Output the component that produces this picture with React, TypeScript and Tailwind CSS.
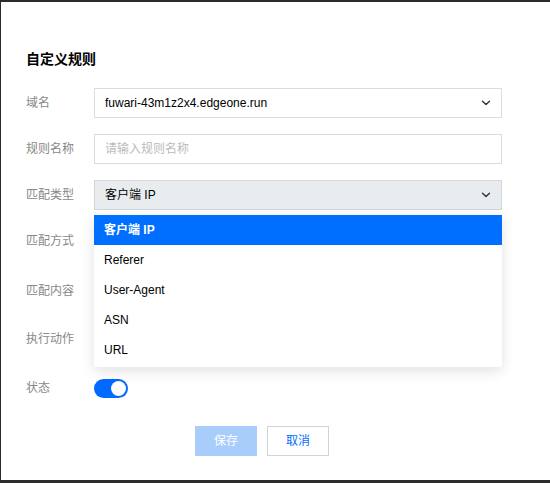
import React from "react";

const font = { fontFamily: '"Liberation Sans", "Noto Sans CJK SC", sans-serif' };

function Chevron() {
  return (
    <svg width="10" height="6" viewBox="0 0 10 6" fill="none" stroke="#333" strokeWidth="1.4" strokeLinecap="round" strokeLinejoin="round">
      <path d="M1.5 1.2 5 4.6 8.5 1.2" />
    </svg>
  );
}

function Row({ label, children, top = "mt-4", h = "h-[30px]" }: { label: string; children?: React.ReactNode; top?: string; h?: string }) {
  return (
    <div className={`flex items-center ${top} ${h}`}>
      <div className="w-[68px] shrink-0 text-[12px] text-[#888]">{label}</div>
      <div className="flex-1">{children}</div>
    </div>
  );
}

const options = ["客户端 IP", "Referer", "User-Agent", "ASN", "URL"];

export default function App() {
  return (
    <div className="h-[483px] w-[550px] bg-[#2c2c2c] pt-[2px] pb-[3px] pl-[1px]" style={font}>
      <div className="relative h-full bg-white pl-[25px] pr-[48px]">
        <h2 className="pt-[48px] text-[14px] font-bold leading-[18px] text-black">自定义规则</h2>

        <div className="mt-[20px]">
          <Row label="域名" top="mt-0">
            <div className="flex h-[30px] items-center justify-between border border-[#dcdcdc] px-[10px] text-[12px] text-black">
              <span>fuwari-43m1z2x4.edgeone.run</span>
              <Chevron />
            </div>
          </Row>
          <Row label="规则名称">
            <div className="flex h-[30px] items-center border border-[#dcdcdc] px-[10px] text-[12px] text-[#bbb]">
              请输入规则名称
            </div>
          </Row>
          <Row label="匹配类型">
            <div className="flex h-[30px] items-center justify-between border border-[#d4d6da] bg-[#e9ecef] px-[10px] text-[12px] text-black">
              <span>客户端 IP</span>
              <Chevron />
            </div>
          </Row>
          <Row label="匹配方式" />
          <Row label="匹配内容" top="mt-[20px]" />
          <Row label="执行动作" top="mt-[18px]" />
          <Row label="状态" top="mt-[24px]" h="h-[20px]">
            <div className="flex h-[19px] w-[34px] items-center justify-end rounded-full bg-[#0069ff] pr-[2px]">
              <div className="h-[15px] w-[15px] rounded-full bg-white" />
            </div>
          </Row>
        </div>

        <div className="mt-[28px] flex justify-center gap-[10px] pr-[4px]">
          <button className="h-[30px] w-[62px] bg-[#a9cdfb] text-[12px] text-white">保存</button>
          <button className="h-[30px] w-[62px] border border-[#d0d3d8] bg-white text-[12px] text-[#006eff]">取消</button>
        </div>

        {/* open options menu of the match-type select */}
        <ul className="absolute left-[93px] top-[213px] w-[408px] rounded-b-[2px] bg-white pb-[2px] shadow-[0_4px_14px_rgba(0,0,0,0.12)]">
          {options.map((o, i) => (
            <li
              key={o}
              className={`flex h-[30px] items-center px-[10px] text-[12px] ${i === 0 ? "bg-[#006eff] font-bold text-white" : "text-black"}`}
            >
              {o}
            </li>
          ))}
        </ul>
      </div>
    </div>
  );
}
